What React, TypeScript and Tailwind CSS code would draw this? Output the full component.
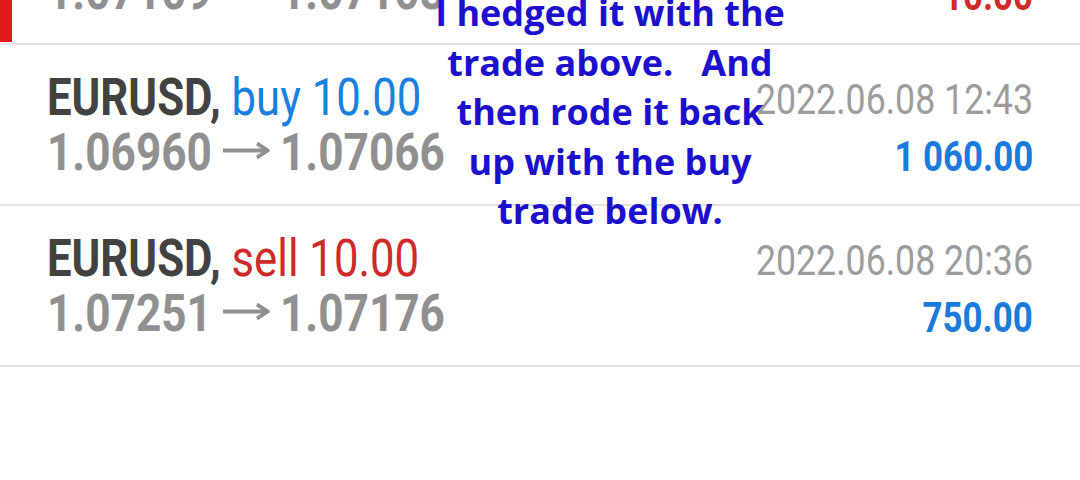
import React from 'react';

type Trade = {
  symbol: string;
  side: 'buy' | 'sell';
  volume: string;
  open: string;
  close: string;
  time: string;
  profit: string;
  profitUp: boolean;
};

const TRADES: Trade[] = [
  {
    symbol: 'EURUSD',
    side: 'sell',
    volume: '10.00',
    open: '1.07109',
    close: '1.07108',
    time: '2022.06.08 12:40',
    profit: '-10.00',
    profitUp: false,
  },
  {
    symbol: 'EURUSD',
    side: 'buy',
    volume: '10.00',
    open: '1.06960',
    close: '1.07066',
    time: '2022.06.08 12:43',
    profit: '1 060.00',
    profitUp: true,
  },
  {
    symbol: 'EURUSD',
    side: 'sell',
    volume: '10.00',
    open: '1.07251',
    close: '1.07176',
    time: '2022.06.08 20:36',
    profit: '750.00',
    profitUp: true,
  },
];

function Arrow() {
  return (
    <svg width="55" height="17" viewBox="0 0 55 17" className="inline-block align-[11px] ml-[13px] mr-[12px]">
      <path d="M0 8.5H51" stroke="currentColor" strokeWidth="4" fill="none" />
      <path d="M40 1.5L52.5 8.5L40 15.5" stroke="currentColor" strokeWidth="4" fill="none" strokeLinejoin="miter" />
    </svg>
  );
}

// Roboto is squeezed a bit to stand in for the condensed face of the app
function TradeRow({ trade, marked = false, first = false }: { trade: Trade; marked?: boolean; first?: boolean }) {
  return (
    <div className={`flex h-[161px] border-b-2 border-[#e3e3e3] ${first ? '-mt-[116px]' : ''}`}>
      {marked ? <div className="w-[12px] self-stretch bg-[#e11b1b] mb-[1px]" /> : null}
      <div className={`flex flex-1 justify-between ${marked ? 'pl-[35px]' : 'pl-[47px]'} pr-[47px]`}>
        <div className="pt-[25px] text-[52px] leading-[55px] whitespace-nowrap">
          <div>
            <span className="inline-block origin-left scale-x-[0.84]">
              <span className="font-bold text-[#424242]">{trade.symbol},</span>{' '}
              <span className={trade.side === 'buy' ? 'text-[#1a80de]' : 'text-[#cf2a2a]'}>
                {trade.side} {trade.volume}
              </span>
            </span>
          </div>
          <div>
            <span className="inline-block origin-left scale-x-[0.85] font-bold text-[#909090]">
              {trade.open}
              <Arrow />
              {trade.close}
            </span>
          </div>
        </div>
        <div className="pt-[26px] text-[42px] leading-[57px] whitespace-nowrap text-right">
          <div>
            <span className="inline-block origin-right scale-x-[0.85] text-[#9c9c9c]">{trade.time}</span>
          </div>
          <div>
            <span
              className={`inline-block origin-right scale-x-[0.83] font-bold ${
                trade.profitUp ? 'text-[#1a7bdc]' : 'text-[#d12a2a]'
              }`}
            >
              {trade.profit}
            </span>
          </div>
        </div>
      </div>
    </div>
  );
}

export default function App() {
  return (
    <div className="relative w-[1080px] h-[480px] overflow-hidden bg-white font-['Roboto',sans-serif]">
      <div className="flex flex-col">
        {TRADES.map((t, i) => (
          <TradeRow key={i} trade={t} marked={i === 0} first={i === 0} />
        ))}
      </div>

      {/* hand-written note laid over the list */}
      <div className="absolute left-[610px] -top-[12px] -translate-x-1/2 w-[440px] text-center font-['Open_Sans',sans-serif] font-bold text-[36px] leading-[49.5px] text-[#1c10cc] whitespace-nowrap">
        <div>I hedged it with the</div>
        <div>trade above.&nbsp;&nbsp; And</div>
        <div>then rode it back</div>
        <div>up with the buy</div>
        <div>trade below.</div>
      </div>
    </div>
  );
}
